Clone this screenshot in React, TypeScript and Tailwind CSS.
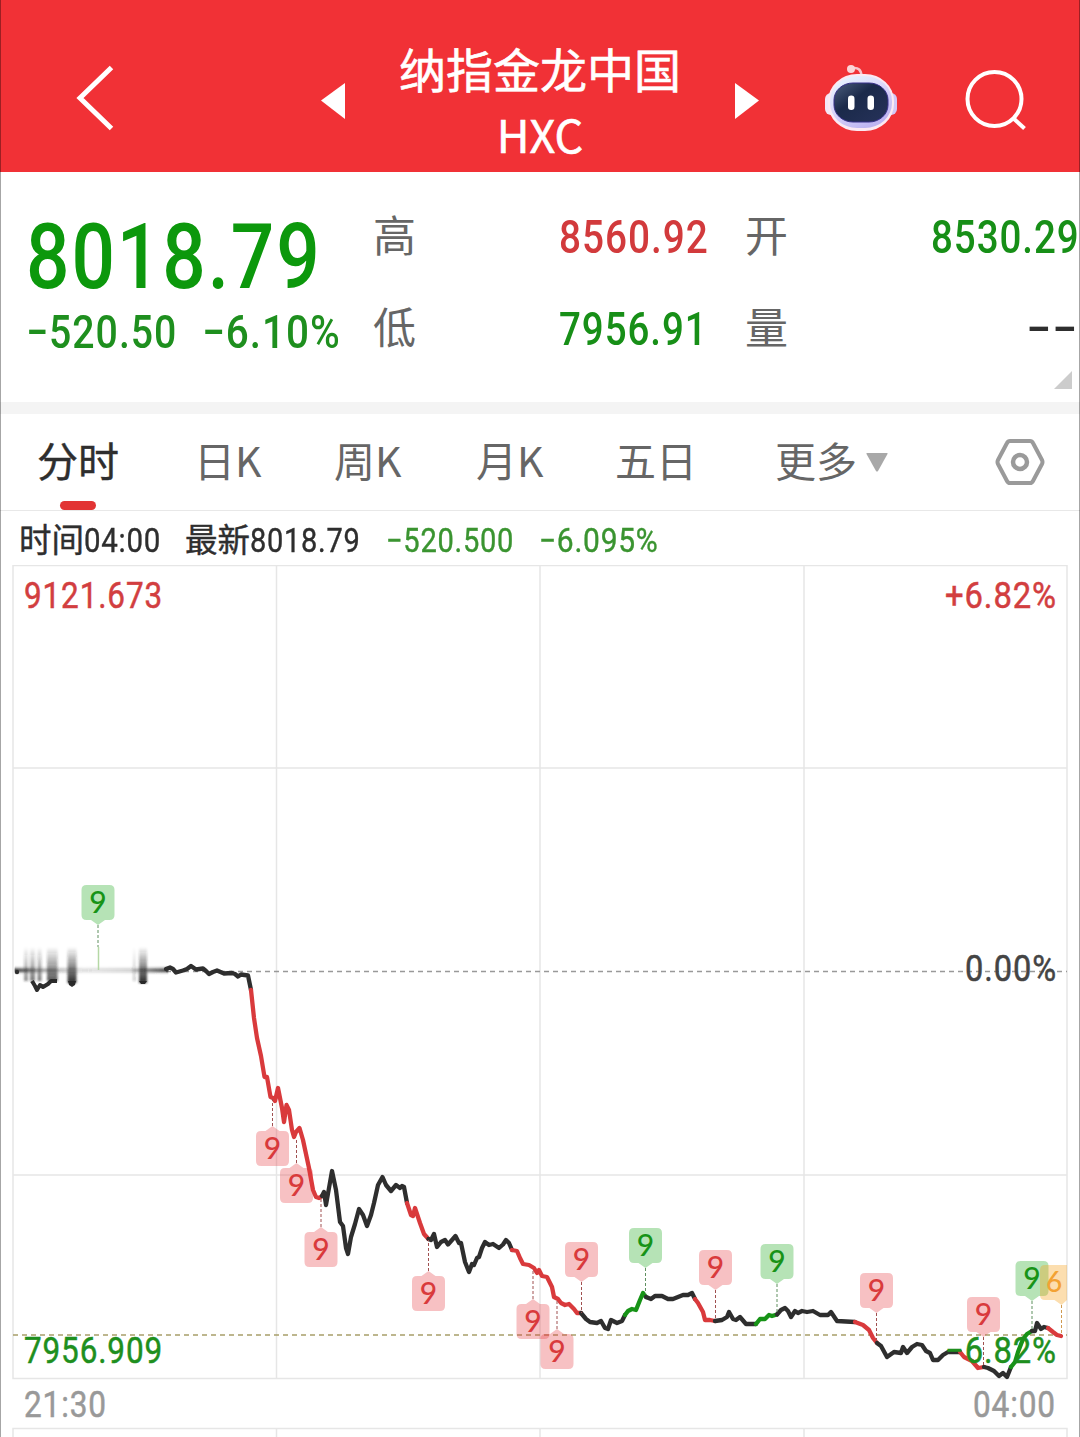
import { useLayoutEffect, useRef, useState } from 'react';
import clsx from 'clsx';

const COLORS = { black: '#2e2e2e', red: '#d93a3c', green: '#179317' };

type Segment = { color: keyof typeof COLORS; points: string };

const segments: Segment[] = [
  {
    color: 'black',
    points:
      '166,969 170,967.5 173,969 176,972.5 183,970.5 187,969 191,966 196,969.5 203,968.5 206,971 209,974 213,972 217,970.5 224,973.5 232,973 235,974 238,976.5 241,974.5 248,975.5 251,990',
  },
  {
    color: 'red',
    points:
      '251,990 254,1018 257,1038 261,1056 264.5,1077 267,1077 270.5,1097 273,1098 275,1101 278,1088 282,1108 284,1122 286.5,1105 289,1110 292,1130 294,1137 296,1132 299.5,1128 303,1140 309,1168 313,1190 316,1197 319,1198 322,1196',
  },
  {
    color: 'black',
    points:
      '322,1196 324,1192 326,1205 332,1171 336,1190 340,1222 343,1226 346,1248 348,1254 351,1237 355,1224 359,1209 363,1215 367,1226 371,1215 374,1203 378,1185 382.5,1177 386,1185 391,1191 396,1185 400,1188 402,1186 404,1187 407,1203',
  },
  { color: 'red', points: '407,1203 411,1215 413,1216 415,1208 420,1223 424,1234 428.5,1239' },
  {
    color: 'black',
    points:
      '428.5,1239 431,1240 434,1234 437,1247 441,1242 445,1240 448,1244.5 452,1240 455.5,1236 459,1243 461,1243 465,1262 469,1272 472,1264 474,1265 477,1258 479,1257 482,1248 485,1242 489,1245 493,1244 499,1248 503,1244.5 506,1240 509,1243 512,1250',
  },
  {
    color: 'red',
    points:
      '512,1250 517,1251 520,1258 523,1264 529,1265 534,1268 537,1273 539,1270 542,1276 547,1277 552,1287 554,1297 558,1299 561,1303 565,1305 569,1304 574,1309 577,1313 581,1313',
  },
  {
    color: 'black',
    points: '581,1313 586,1319 590,1322 597,1323 601,1321 605,1328 608,1329 611,1320 617,1323 622,1321 625,1315',
  },
  { color: 'green', points: '625,1315 628,1311 632,1309 636,1310 640,1300 643,1293 646,1297' },
  {
    color: 'black',
    points:
      '646,1297 651,1299 655,1296 662,1296 668,1299 673,1299 678,1297 683,1295 688,1295 692,1293 695,1299',
  },
  { color: 'red', points: '695,1299 698,1303 703,1312 705,1320 710,1320 715,1321' },
  {
    color: 'black',
    points: '715,1321 722,1320 727,1317 729,1312 733,1319 736,1320 740,1317 746,1324 756,1324',
  },
  { color: 'green', points: '756,1324 760,1319 765,1319 769,1315 772,1316 777,1314.5' },
  {
    color: 'black',
    points:
      '777,1314.5 781,1310 785,1308 788,1311 791,1317 795,1311 798,1313 802,1311 807,1312 813,1311 820,1315 828,1315 831,1312 837,1321 855,1322',
  },
  { color: 'red', points: '855,1322 863,1325 869,1330 873,1338 877,1343' },
  {
    color: 'black',
    points:
      '877,1343 881,1346 887,1357 894,1352 901,1353 903,1347 907,1353 912,1347 917,1344 922,1345 926,1351 930,1353 933,1360 938,1360 943,1355 948,1352 960,1352',
  },
  { color: 'red', points: '960,1352 964,1357 972,1361 978,1368 984,1367' },
  { color: 'black', points: '984,1367 988,1368 994,1371 999,1376 1003,1373 1007,1377 1011,1367' },
  { color: 'green', points: '1011,1367 1015,1362 1018,1352 1023,1339 1027,1334 1032,1331' },
  { color: 'black', points: '1032,1331 1035,1331 1037,1323 1041,1329 1044,1327 1048,1328' },
  { color: 'red', points: '1048,1328 1053,1332 1057,1335 1061,1336' },
];

// top = top edge of the box, end = where the dashed connector meets the line
type Signal = { x: number; top: number; end: number; tone: 'red' | 'green' };

const signals: Signal[] = [
  { x: 98, top: 885, end: 947, tone: 'green' },
  { x: 272.5, top: 1131, end: 1099, tone: 'red' },
  { x: 296.5, top: 1168, end: 1138, tone: 'red' },
  { x: 321, top: 1232, end: 1199, tone: 'red' },
  { x: 428.5, top: 1276, end: 1240, tone: 'red' },
  { x: 533, top: 1304, end: 1270, tone: 'red' },
  { x: 557, top: 1334, end: 1299, tone: 'red' },
  { x: 581.5, top: 1242, end: 1313, tone: 'red' },
  { x: 645.5, top: 1228, end: 1294, tone: 'green' },
  { x: 715.5, top: 1250, end: 1320, tone: 'red' },
  { x: 777, top: 1244, end: 1314, tone: 'green' },
  { x: 876.5, top: 1273, end: 1342, tone: 'red' },
  { x: 983.5, top: 1297, end: 1367, tone: 'red' },
  { x: 1032, top: 1261, end: 1331, tone: 'green' },
];

const smears = [
  { x: 24, w: 4, h: 34, o: 0.5 },
  { x: 30, w: 5, h: 34, o: 0.6 },
  { x: 37.5, w: 4, h: 34, o: 0.6 },
  { x: 47, w: 10.5, h: 34, o: 0.75 },
  { x: 67.5, w: 9, h: 36, o: 0.95 },
  { x: 133, w: 2.5, h: 34, o: 0.25 },
  { x: 139, w: 8, h: 36, o: 0.95 },
];

const tabs = [
  { label: '日K', className: 'w-[140px]' },
  { label: '周K', className: 'w-[142px]' },
  { label: '月K', className: 'w-[139px]' },
  { label: '五日', className: 'w-[160px]' },
];

// Squeezes digits horizontally so that they fill exactly the given width
function Num({ children, width, className }: { children: string; width: number; className?: string }) {
  const ref = useRef<HTMLSpanElement>(null);
  const [scale, setScale] = useState(1);

  useLayoutEffect(() => {
    if (!ref.current) return;
    const trailing = parseFloat(getComputedStyle(ref.current).letterSpacing) || 0;
    setScale(width / (ref.current.offsetWidth - trailing));
  }, [width, children]);

  return (
    <span className={clsx("block font-['Roboto',sans-serif] leading-none", className)} style={{ width }}>
      <span
        ref={ref}
        className="inline-block origin-left align-top tracking-[0.025em] whitespace-nowrap"
        style={{ transform: `scaleX(${scale})` }}
      >
        {children}
      </span>
    </span>
  );
}

function Robot() {
  return (
    <svg className="h-[68px] w-[72px]" viewBox="825 64 72 68">
      <defs>
        <linearGradient id="shell" x1="0" y1="0" x2="0.6" y2="1">
          <stop offset="0" stopColor="#eafcff" />
          <stop offset="0.5" stopColor="#dcd8fa" />
          <stop offset="1" stopColor="#bdb4f2" />
        </linearGradient>
        <linearGradient id="visor" x1="0" y1="0" x2="1" y2="1">
          <stop offset="0" stopColor="#4b5e7c" />
          <stop offset="0.4" stopColor="#1b2a4a" />
          <stop offset="1" stopColor="#26325a" />
        </linearGradient>
      </defs>
      <path d="M853 68q8-1 8.500 8" fill="none" stroke="#f7c4cc" strokeWidth="2.500" />
      <circle cx="851" cy="69" r="4" fill="#fbd5d8" />
      <rect x="825" y="93" width="14" height="22" rx="6" fill="#f4e6f6" />
      <rect x="883" y="93" width="14" height="22" rx="6" fill="#d3c8f6" />
      <rect x="828" y="74" width="66" height="57" rx="29" ry="27" fill="#fbe9f2" />
      <rect x="830" y="76" width="62" height="52" rx="27" ry="25" fill="url(#shell)" />
      <rect x="834" y="83" width="54" height="39" rx="19" ry="17" fill="url(#visor)" stroke="#37308a" strokeWidth="1" />
      <rect x="848" y="95.500" width="6.500" height="14.500" rx="3.200" fill="#fff" />
      <rect x="867.500" y="95.500" width="6.500" height="14.500" rx="3.200" fill="#fff" />
    </svg>
  );
}

function Header() {
  return (
    <header className="flex h-[172px] items-start bg-[#f13136] pl-[76px] text-white">
      <svg className="mt-[64px] h-[68px] w-[40px]" viewBox="76 64 40 68">
        <path d="M111.500 67.500L80 98l31.500 30.500" fill="none" stroke="#fff" strokeWidth="5" />
      </svg>
      <svg className="mt-[83px] ml-[205px] h-[36px] w-[24px]" viewBox="0 0 24 36">
        <path d="M24 0v36L0 17.500z" fill="#fff" />
      </svg>
      <div className="flex w-[390px] flex-col items-center pt-[43px] font-['Noto_Sans_CJK_SC',sans-serif] [-webkit-text-stroke:0.6px_white]">
        <h1 className="text-[47px] leading-[50px]">纳指金龙中国</h1>
        <div className="mt-[19px] text-[45px] leading-[44px]">HXC</div>
      </div>
      <svg className="mt-[83px] h-[36px] w-[24px]" viewBox="0 0 24 36">
        <path d="M0 0v36l24-18.500z" fill="#fff" />
      </svg>
      <div className="mt-[64px] ml-[66px]">
        <Robot />
      </div>
      <svg className="mt-[68px] ml-[67px] h-[64px] w-[64px]" viewBox="964 68 64 64">
        <circle cx="994.500" cy="99" r="27" fill="none" stroke="#fff" strokeWidth="4" />
        <path d="M1013 118l11.500 10.500" stroke="#fff" strokeWidth="4" />
      </svg>
    </header>
  );
}

function Quote() {
  return (
    <section className="flex h-[230px] pl-[26px]">
      <div className="w-[347px] font-medium text-[#0c980c]">
        <Num width={294} className="mt-[41px] text-[90px]">8018.79</Num>
        <div className="mt-[6px] flex text-[46px] text-[#1e8f1e]">
          <Num width={150}>−520.50</Num>
          <Num width={138} className="ml-[26px]">−6.10%</Num>
        </div>
      </div>
      <div className="w-[372px] pt-[42px] font-['Noto_Sans_CJK_SC',sans-serif] text-[43px] leading-[46px] text-[#666]">
        <div className="flex">
          <div className="w-[186px] -translate-y-1">高</div>
          <Num width={149} className="text-[46px] font-medium text-[#d23a3c]">8560.92</Num>
        </div>
        <div className="mt-[46px] flex">
          <div className="w-[186px] -translate-y-1">低</div>
          <Num width={148} className="text-[46px] font-medium text-[#178f17]">7956.91</Num>
        </div>
      </div>
      <div className="flex-1 pt-[42px] font-['Noto_Sans_CJK_SC',sans-serif] text-[43px] leading-[46px] text-[#666]">
        <div className="flex">
          <div className="w-[186px] -translate-y-1">开</div>
          <Num width={148} className="text-[46px] font-medium text-[#178f17]">8530.29</Num>
        </div>
        <div className="mt-[46px] flex">
          <div className="w-[281px] -translate-y-1">量</div>
          <Num width={51} className="text-[46px] font-medium text-[#2e2e2e]">−−</Num>
        </div>
        <svg className="mt-[19px] ml-[309px] h-[18px] w-[18px]" viewBox="0 0 18 18">
          <path d="M18 0v18H0z" fill="#ccc" />
        </svg>
      </div>
    </section>
  );
}

function Tabs() {
  return (
    <nav className="flex h-[97px] border-b border-[#e8e8e8] pl-[37px] font-['Noto_Sans_CJK_SC',sans-serif] text-[41px] leading-[44px] text-[#666]">
      <div className="w-[157px] pt-[23px]">
        <div className="text-[#2e2e2e] [-webkit-text-stroke:0.4px_#2e2e2e]">分时</div>
        <div className="mt-[20px] ml-[23px] h-[9px] w-[36px] rounded-full bg-[#e23434]" />
      </div>
      {tabs.map((t) => (
        <div key={t.label} className={clsx('pt-[23px]', t.className)}>
          {t.label}
        </div>
      ))}
      <div className="w-[91px] pt-[23px]">更多</div>
      <svg className="mt-[39px] h-[19px] w-[22px]" viewBox="0 0 22 19">
        <path d="M1 0h20q1 0 .5 1L12 18q-1 1-2 0L.5 1Q0 0 1 0z" fill="#a8a8a8" />
      </svg>
      <svg className="mt-[24px] ml-[107px] h-[48px] w-[50px]" viewBox="995 438 50 48">
        <path
          d="M1010 441h20q2 0 3 2l9 17q1 2 0 4l-9 17q-1 2-3 2h-20q-2 0-3-2l-9-17q-1-2 0-4l9-17q1-2 3-2z"
          fill="none"
          stroke="#9a9a9a"
          strokeWidth="4"
        />
        <circle cx="1020" cy="462" r="7" fill="none" stroke="#9a9a9a" strokeWidth="4.500" />
      </svg>
    </nav>
  );
}

function InfoRow() {
  return (
    <div className="flex h-[54px] pt-[13px] pl-[19px] font-['Noto_Sans_CJK_SC',sans-serif] text-[32.5px] leading-[33px] text-[#2e2e2e] [-webkit-text-stroke:0.4px]">
      <span className="-translate-y-[3px]">时间</span>
      <Num width={76} className="text-[33px]">04:00</Num>
      <span className="ml-[25px] -translate-y-[3px]">最新</span>
      <Num width={110} className="text-[33px]">8018.79</Num>
      <Num width={127} className="ml-[26px] text-[33px] text-[#3a9430]">−520.500</Num>
      <Num width={119} className="ml-[26px] text-[33px] text-[#3a9430]">−6.095%</Num>
    </div>
  );
}

function SignalBadge({ x, top, end, tone }: Signal) {
  const above = end > top;
  const bottom = top + 35;
  const color = COLORS[tone];
  const l = x - 16.5;
  const r = x + 16.5;
  // rounded box with a small tip on the side that faces the line
  const topEdge = above ? `H${r - 5}` : `H${x - 7}L${x} ${top - 5}L${x + 7} ${top}H${r - 5}`;
  const bottomEdge = above ? `H${x + 7}L${x} ${bottom + 5}L${x - 7} ${bottom}H${l + 5}` : `H${l + 5}`;
  return (
    <g>
      <line
        x1={x}
        x2={x}
        y1={above ? bottom + 5 : top - 5}
        y2={end}
        stroke={tone === 'red' ? '#a05050' : '#5f8f5f'}
        strokeWidth="1"
        strokeDasharray="3 2"
      />
      <path
        d={`M${l + 5} ${top}${topEdge}Q${r} ${top} ${r} ${top + 5}V${bottom - 5}Q${r} ${bottom} ${r - 5} ${bottom}${bottomEdge}Q${l} ${bottom} ${l} ${bottom - 5}V${top + 5}Q${l} ${top} ${l + 5} ${top}z`}
        fill={tone === 'red' ? '#e4383c' : '#12a512'}
        fillOpacity="0.31"
      />
      <text x={x} y={top + 28} textAnchor="middle" fontSize="30" fontWeight="500" fill={color} className="font-['Lato',sans-serif]">
        9
      </text>
    </g>
  );
}

function ChartLabel({ x, y, w, fill, children }: { x: number; y: number; w: number; fill: string; children: string }) {
  return (
    <text
      x={x}
      y={y}
      textLength={w}
      lengthAdjust="spacingAndGlyphs"
      fontSize="36.500"
      letterSpacing="1"
      stroke={fill}
      strokeWidth="0.5"
      fill={fill}
      className="font-['Roboto',sans-serif]"
    >
      {children}
    </text>
  );
}

function Chart() {
  return (
    <svg className="block h-[872px] w-[1080px]" viewBox="0 565 1080 872">
      <defs>
        <linearGradient id="smear" x1="0" y1="0" x2="0" y2="1">
          <stop offset="0" stopColor="#222" stopOpacity="0" />
          <stop offset="0.600" stopColor="#222" stopOpacity="0.600" />
          <stop offset="1" stopColor="#222" stopOpacity="1" />
        </linearGradient>
        <linearGradient id="fade" x1="0" y1="0" x2="1" y2="0">
          <stop offset="0" stopColor="#222" />
          <stop offset="0.150" stopColor="#222" stopOpacity="0.400" />
          <stop offset="0.450" stopColor="#222" stopOpacity="0.120" />
          <stop offset="0.750" stopColor="#222" stopOpacity="0.200" />
          <stop offset="1" stopColor="#222" />
        </linearGradient>
        <filter id="soft" x="-20%" y="-20%" width="140%" height="140%">
          <feGaussianBlur stdDeviation="1" />
        </filter>
        <filter id="softLine" filterUnits="userSpaceOnUse" x="0" y="955" width="180" height="30">
          <feGaussianBlur stdDeviation="0.5 1.5" />
        </filter>
      </defs>

      <g fill="none" stroke="#e6e6e6" strokeWidth="1.500">
        <rect x="13" y="565.500" width="1054" height="813" />
        <path d="M276.500 565V1378M540 565V1378M804 565V1378M13 768H1067M13 1175H1067" />
        <path d="M13 1440V1428.500H1067V1440M276.500 1428V1440M540 1428V1440M804 1428V1440" />
      </g>

      <line x1="166" x2="1067" y1="971.500" y2="971.500" stroke="#999" strokeWidth="1.500" strokeDasharray="5 4" />

      <ChartLabel x={24} y={608} w={139} fill="#d23e40">9121.673</ChartLabel>
      <ChartLabel x={945} y={608} w={112} fill="#d23e40">+6.82%</ChartLabel>
      <ChartLabel x={965} y={981} w={92} fill="#444">0.00%</ChartLabel>
      <ChartLabel x={24} y={1362.5} w={139} fill="#1e8f1e">7956.909</ChartLabel>
      <ChartLabel x={24} y={1417} w={83} fill="#999">21:30</ChartLabel>
      <ChartLabel x={973} y={1417} w={83} fill="#999">04:00</ChartLabel>

      <line x1="13" x2="1067" y1="1335" y2="1335" stroke="#a89f6a" strokeWidth="1.500" strokeDasharray="5 4" />

      <polyline points="32,981 35,986 37,990 40,985 43,987 48,984 51,981 57,981" fill="none" stroke="#2e2e2e" strokeWidth="4" strokeLinejoin="round" />
      <path d="M68 981h8l-1 4-3 2-3-2zM139 981h8l-2 3h-4z" fill="#2e2e2e" />
      <g filter="url(#soft)">
        {smears.map((s) => (
          <rect key={s.x} x={s.x} y="947" width={s.w} height={s.h} fill="url(#smear)" opacity={s.o} />
        ))}
      </g>
      <path d="M15 969H168v2.500H15z" fill="url(#fade)" stroke="url(#fade)" filter="url(#softLine)" />
      <circle cx="17" cy="972" r="2.200" fill="#2e2e2e" />
      <line x1="98.500" x2="98.500" y1="947" y2="970" stroke="#b5d8a5" strokeWidth="1.500" />

      {segments.map((s) => (
        <polyline
          key={s.points}
          points={s.points}
          fill="none"
          stroke={COLORS[s.color]}
          strokeWidth="4.300"
          strokeLinejoin="round"
          strokeLinecap="round"
        />
      ))}

      <ChartLabel x={945} y={1362.5} w={112} fill="#1e8f1e">−6.82%</ChartLabel>

      {signals.map((s) => (
        <SignalBadge key={s.x} {...s} />
      ))}

      <line x1="1061.500" x2="1061.500" y1="1305" y2="1335" stroke="#d09a50" strokeDasharray="3 2" />
      <path
        d="M1045 1265H1067V1300L1061.500 1305L1054.500 1300H1045Q1040 1300 1040 1295V1270Q1040 1265 1045 1265z"
        fill="#f7a11b"
        fillOpacity="0.350"
      />
      <text x="1054" y="1292" textAnchor="middle" fontSize="28" fontWeight="500" fill="#f3a233" className="font-['Lato',sans-serif]">
        6
      </text>
    </svg>
  );
}

export default function App() {
  return (
    <div className="relative h-[1437px] w-[1080px] overflow-hidden bg-white">
      <Header />
      <Quote />
      <div className="h-3 bg-[#f4f4f4]" />
      <Tabs />
      <InfoRow />
      <Chart />
      <div className="pointer-events-none absolute inset-0 border-x border-black/35" />
    </div>
  );
}
